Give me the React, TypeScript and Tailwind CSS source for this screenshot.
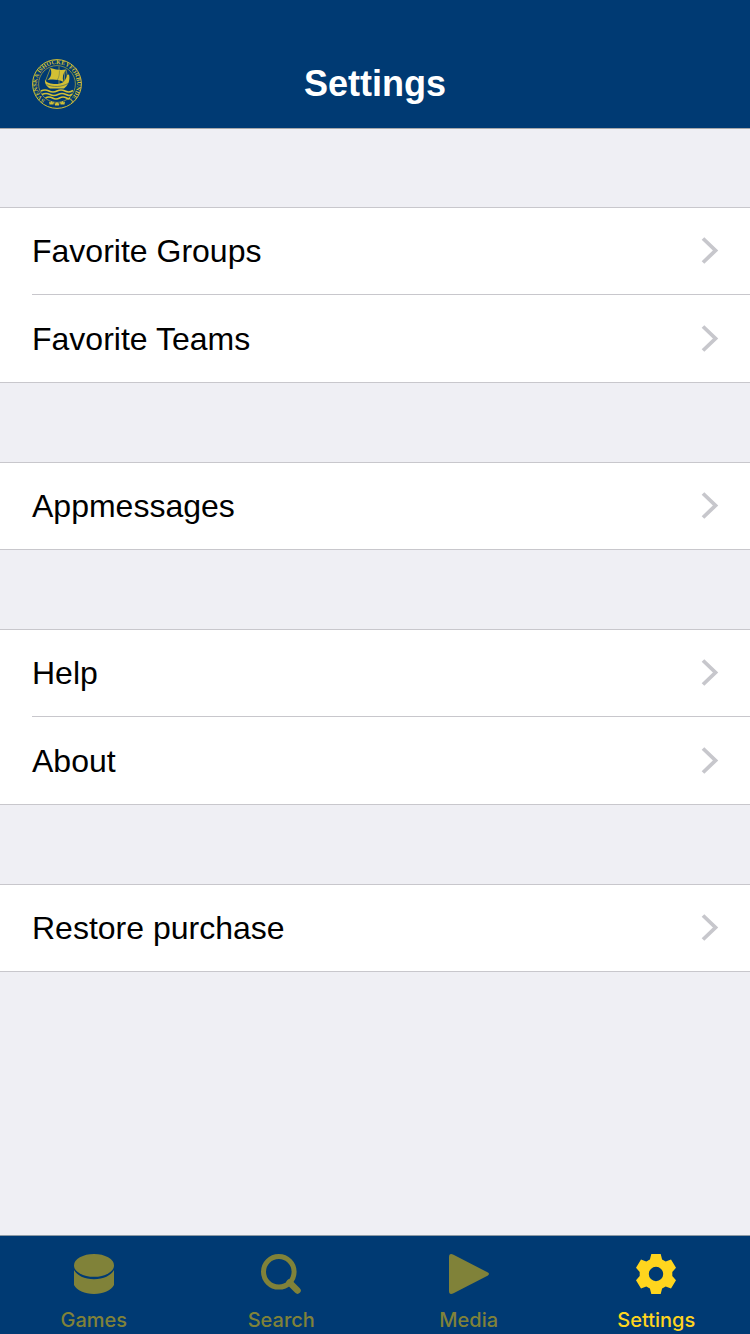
import type { ReactNode } from "react";

const groups = [
  ["Favorite Groups", "Favorite Teams"],
  ["Appmessages"],
  ["Help", "About"],
  ["Restore purchase"],
];

function Crest() {
  return (
    <svg viewBox="0 0 50 50" className="size-[50px]" fill="none" stroke="#d2c034" aria-hidden="true">
      <defs>
        <path id="crest-ring" d="M16 42.900A20 20 0 1 1 34 42.900" />
      </defs>
      <circle cx="25" cy="25" r="24.400" strokeWidth="1" />
      <circle cx="25" cy="25" r="18.400" strokeWidth="0.600" />
      <text
        fill="#d2c034"
        stroke="none"
        className="font-['Liberation_Serif',serif] text-[6px] font-bold"
      >
        <textPath href="#crest-ring" startOffset="50%" textAnchor="middle">
          SVENSKA ISHOCKEYFÖRBUNDET
        </textPath>
      </text>
      {/* sail */}
      <path d="M18.500 9C24 11 30 11.500 34 10.500c-3 4-4 8-2.500 12.500-5-2.500-10-3-16-2 4-3 4.500-7 3-12z" fill="#d2c034" stroke="none" />
      <path d="M27.500 11.500c0 3.500-.500 6.500-2 9.500" stroke="#003a73" strokeWidth="0.400" />
      <path d="M27 7.500V26M34 10.500l2.500 12M18.500 9L13.500 22M33 11l-1 14" strokeWidth="0.600" />
      {/* hull */}
      <path d="M13 20.500c1.500 3.500 5.500 4.500 11 4.500 6 0 9.500-2 11-9l2-.500c1.500 6-1 11-5 14H18c-3.500-2-5.500-5-5-9z" fill="#d2c034" stroke="none" />
      <path d="M14.500 25.500c7 3 15 2.500 21.500-1" stroke="#003a73" strokeWidth="0.500" />
      {/* water */}
      <path d="M9 32q4-2 8 0t8 0 8 0 8-.500M10 35.500q4-2 8 0t8 0 8 0 6-.500M13.500 39q3.500-2 7 0t7 0 7 0 3-.500" strokeWidth="1.500" />
      {/* crowns */}
      <path d="M17 42.500l1.200 1 1.300-1.500 1.300 1.500 1.200-1-.5 3h-4zM22.500 43.500l1.200 1 1.300-1.500 1.300 1.500 1.200-1-.5 3h-4zM28 42.500l1.200 1 1.300-1.500 1.300 1.500 1.200-1-.5 3h-4z" fill="#d2c034" stroke="none" />
    </svg>
  );
}

function Chevron() {
  return (
    <svg viewBox="0 0 16 28" className="h-7 w-4 overflow-visible" fill="none" stroke="#c7c7cc" strokeWidth="3.800" aria-hidden="true">
      <path d="M1 1.500L13.500 13.500L1 25.500" />
    </svg>
  );
}

function TabIcon({ children }: { children: ReactNode }) {
  return (
    <svg viewBox="0 0 40 40" className="size-10" fill="currentColor" aria-hidden="true">
      {children}
    </svg>
  );
}

const tabs = [
  {
    label: "Games",
    icon: (
      <TabIcon>
        <ellipse cx="20" cy="11.400" rx="20" ry="11.400" />
        <path d="M0 16C3 21.500 10.500 25.200 20 25.200s17-3.700 20-9.200V31c-3 5.500-10.500 9-20 9S3 36.500 0 31z" />
      </TabIcon>
    ),
  },
  {
    label: "Search",
    icon: (
      <TabIcon>
        <g fill="none" stroke="currentColor">
          <circle cx="17.800" cy="17.800" r="15.300" strokeWidth="5" />
          <path d="M28.500 28.500l8 8" strokeWidth="6.500" strokeLinecap="round" />
        </g>
      </TabIcon>
    ),
  },
  {
    label: "Media",
    icon: (
      <TabIcon>
        <path d="M0 3Q0-1.300 4.500.700L38.500 18.300Q41.500 20 38.500 21.700L4.500 39.300Q0 41.300 0 37z" />
      </TabIcon>
    ),
  },
  {
    label: "Settings",
    active: true,
    icon: (
      <TabIcon>
        <path
          fillRule="evenodd"
          d="M15.300 0h9.400l1.400 5.400 3.600 2 5.300-1.800L40 13.800l-3.700 4.100v4.200l3.700 4.100-5 8.200-5.300-1.800-3.600 2-1.400 5.400h-9.400l-1.400-5.400-3.600-2L5 34.400 0 26.200l3.700-4.100v-4.200L0 13.800l5-8.200 5.300 1.800 3.600-2zM20 12.800a7.200 7.200 0 1 0 0 14.400 7.200 7.200 0 0 0 0-14.400z"
        />
      </TabIcon>
    ),
  },
];

export default function App() {
  return (
    <div className="flex min-h-screen flex-col bg-[#efeff4] font-['Liberation_Sans',Arial,sans-serif] text-black">
      <header className="grid grid-cols-[1fr_auto_1fr] items-center border-b border-[#a7a7aa] bg-[#003a73] px-8 pt-10">
        <button type="button" aria-label="Home" className="size-[50px]">
          <Crest />
        </button>
        <h1 className="text-4xl leading-[88px] font-bold text-white">Settings</h1>
      </header>

      <main className="flex flex-1 flex-col gap-[79px] pt-[78px]">
        {groups.map((items) => (
          <ul key={items[0]} className="divide-y divide-[#c8c7cc] border-y border-[#c8c7cc] bg-white pl-8">
            {items.map((item, i) => (
              <li key={item}>
                <a
                  href="#"
                  className={`flex items-center justify-between pr-8 ${i === 0 ? "h-[86px]" : "h-[87px]"}`}
                >
                  <span className="text-[32px] leading-10">{item}</span>
                  <Chevron />
                </a>
              </li>
            ))}
          </ul>
        ))}
      </main>

      <nav className="grid grid-cols-4 border-t border-[#8c9aa5] bg-[#003a73] pt-[18px] font-[Inter,sans-serif]">
        {tabs.map(({ label, icon, active }) => (
          <a
            key={label}
            href="#"
            aria-current={active ? "page" : undefined}
            className={`flex flex-col items-center gap-3 text-xl leading-7 font-medium ${active ? "text-[#ffd51e]" : "text-[#808239]"}`}
          >
            {icon}
            {label}
          </a>
        ))}
      </nav>
    </div>
  );
}
